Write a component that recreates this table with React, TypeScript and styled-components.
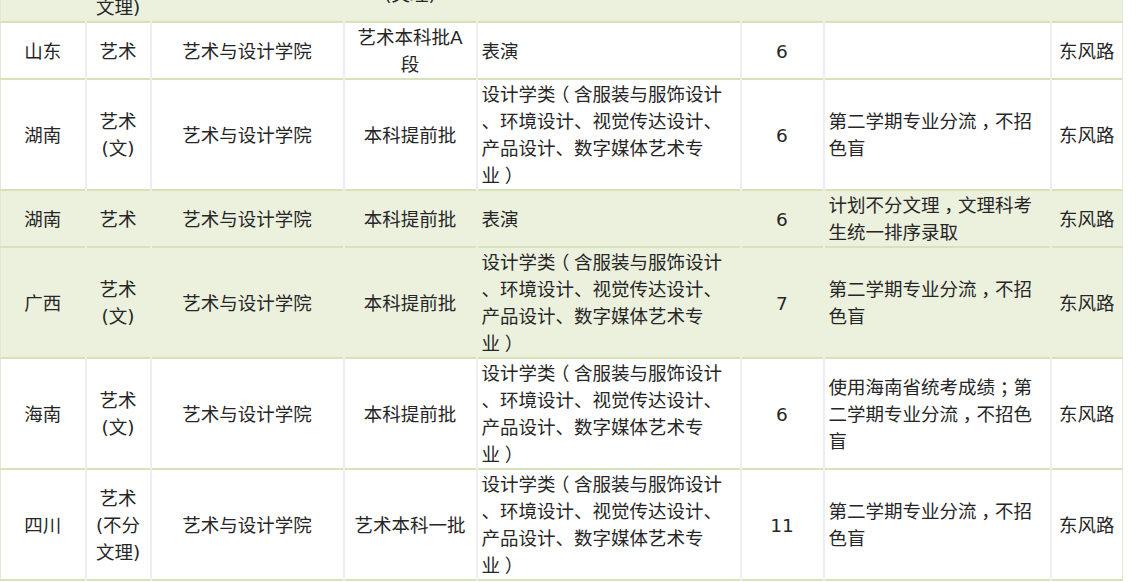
import styled, { createGlobalStyle } from "styled-components";

const GlobalStyle = createGlobalStyle`
  html, body {
    margin: 0;
    padding: 0;
    background: #fff;
    overflow: hidden;
  }
`

type Align = "left" | "center"

type Row = {
  green?: boolean
  cells: string[]
}

// 专业说明那一列原文断行比较特别，直接用换行符写死
const design = "设计学类（含服装与服饰设计\n、环境设计、视觉传达设计、\n产品设计、数字媒体艺术专\n业）"
const split = "第二学期专业分流，不招\n色盲"

const rows: Row[] = [
  { green: true, cells: ["四川", "艺术\n(不分\n文理)", "艺术本科一批", "艺术本科一批\n(文理)", "表演", "4", "", "东风路"] },
  { cells: ["山东", "艺术", "艺术与设计学院", "艺术本科批A\n段", "表演", "6", "", "东风路"] },
  { cells: ["湖南", "艺术\n(文)", "艺术与设计学院", "本科提前批", design, "6", split, "东风路"] },
  { green: true, cells: ["湖南", "艺术", "艺术与设计学院", "本科提前批", "表演", "6", "计划不分文理，文理科考\n生统一排序录取", "东风路"] },
  { green: true, cells: ["广西", "艺术\n(文)", "艺术与设计学院", "本科提前批", design, "7", split, "东风路"] },
  { cells: ["海南", "艺术\n(文)", "艺术与设计学院", "本科提前批", design, "6", "使用海南省统考成绩；第\n二学期专业分流，不招色\n盲", "东风路"] },
  { cells: ["四川", "艺术\n(不分\n文理)", "艺术与设计学院", "艺术本科一批", design, "11", split, "东风路"] },
]

const widths = [85, 65, 193, 133, 264, 83, 227, 72]
const aligns: Align[] = ["center", "center", "center", "center", "left", "center", "left", "center"]

// 全角括号、逗号原图是居中的字形，用 halt 压成半宽再放进 1em 里居中
function renderText(text: string) {
  return text.split(/([（），；])/).map((part, i) =>
    /^[（），；]$/.test(part) ? <Punct key={i}>{part}</Punct> : part
  )
}

export default function App() {
  return (
    <>
      <GlobalStyle />
      <Viewport>
        <Table>
          <colgroup>
            {widths.map((w, i) => <col key={i} style={{ width: w }} />)}
          </colgroup>
          <tbody>
            {rows.map((row, r) => (
              <Tr key={r} $green={!!row.green}>
                {row.cells.map((c, i) => (
                  <Td key={i} $align={aligns[i]} $green={!!row.green}>{renderText(c)}</Td>
                ))}
              </Tr>
            ))}
          </tbody>
        </Table>
      </Viewport>
    </>
  )
}

const Viewport = styled.div`
  width: 1131px;
  height: 582px;
  overflow: hidden;
`

// 表格是从中间截下来的，第一行只露出最后一截
const Table = styled.table`
  width: 1122px;
  margin-top: -61px;
  table-layout: fixed;
  border-collapse: collapse;
  border-left: 1px solid #e3e8d6;
  border-right: 1px solid #e3e8d6;
  font-family: "DejaVu Sans", "Noto Sans CJK SC", sans-serif;
  font-size: 18.5px;
  line-height: 27px;
  color: #262626;
`

const Tr = styled.tr<{ $green: boolean }>`
  background: ${p => p.$green ? "#ecf1de" : "#fff"};
  border-bottom: 2px solid #d6e2b8;
`

const Td = styled.td<{ $align: Align; $green: boolean }>`
  padding: 1px 4px 0;
  vertical-align: middle;
  text-align: ${p => p.$align};
  white-space: pre-line;
  border-left: 2px solid ${p => p.$green ? "#ecf1de" : "#eceef3"};
  &:first-child {
    border-left: none;
  }
`

const Punct = styled.span`
  display: inline-block;
  width: 1em;
  text-align: center;
  font-feature-settings: "halt";
`
